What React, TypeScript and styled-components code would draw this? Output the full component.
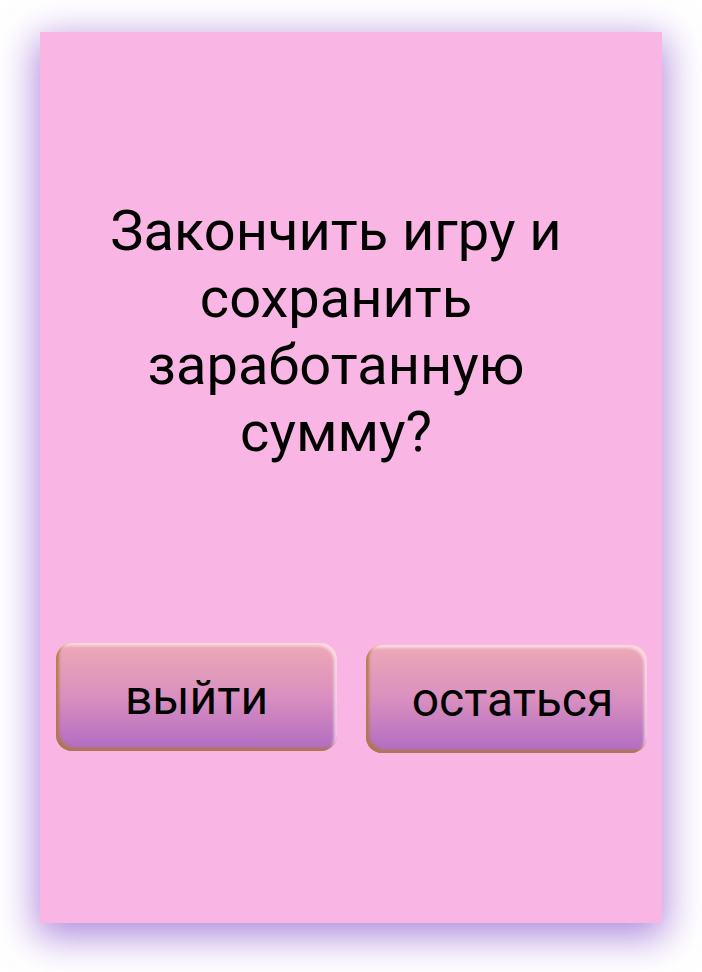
import React from "react";
import styled, { createGlobalStyle } from "styled-components";

const Global = createGlobalStyle`
  html, body { margin: 0; padding: 0; background: #ffffff; }
  body { font-family: Roboto, "Noto Sans", sans-serif; }
`;

const Page = styled.div`
  width: 702px;
  height: 972px;
  padding: 32px 40px 0 40px;
  box-sizing: border-box;
`;

const Card = styled.div`
  width: 622px;
  height: 891px;
  background: #f9b5e3;
  box-shadow: 0 10px 36px 4px rgba(150, 100, 210, 0.75);
  display: flex;
  flex-direction: column;
  box-sizing: border-box;
  padding: 166px 15px 0 16px;
`;

const Question = styled.h1`
  margin: 0;
  padding: 0 31px 0 0;
  font-family: Roboto, sans-serif;
  font-weight: 400;
  font-size: 56px;
  line-height: 67px;
  color: #000;
  text-align: center;
`;

const Actions = styled.div`
  display: flex;
  align-items: flex-start;
  gap: 29px;
  margin-top: 177px;
`;

const ActionButton = styled.button<{ $drop?: number; $shift?: number }>`
  width: 281px;
  height: 108px;
  margin-top: ${(p) => p.$drop ?? 0}px;
  padding: 0 0 0 ${(p) => p.$shift ?? 0}px;
  border: none;
  border-radius: 16px;
  background: linear-gradient(180deg, #eea9b6 0%, #d98fbf 50%, #b06bc2 100%);
  box-shadow: inset 3px -3px 3px rgba(176, 120, 60, 0.9),
    inset -3px 3px 3px rgba(255, 240, 245, 0.7);
  font-family: Roboto, sans-serif;
  font-size: 48px;
  color: #000;
  display: flex;
  align-items: center;
  justify-content: center;
  cursor: pointer;
`;

export default function App() {
  return (
    <>
      <Global />
      <Page>
        <Card>
          <Question>
            Закончить игру и
            <br />
            сохранить
            <br />
            заработанную
            <br />
            сумму?
          </Question>
          <Actions>
            <ActionButton>выйти</ActionButton>
            <ActionButton $drop={2} $shift={12}>
              остаться
            </ActionButton>
          </Actions>
        </Card>
      </Page>
    </>
  );
}
